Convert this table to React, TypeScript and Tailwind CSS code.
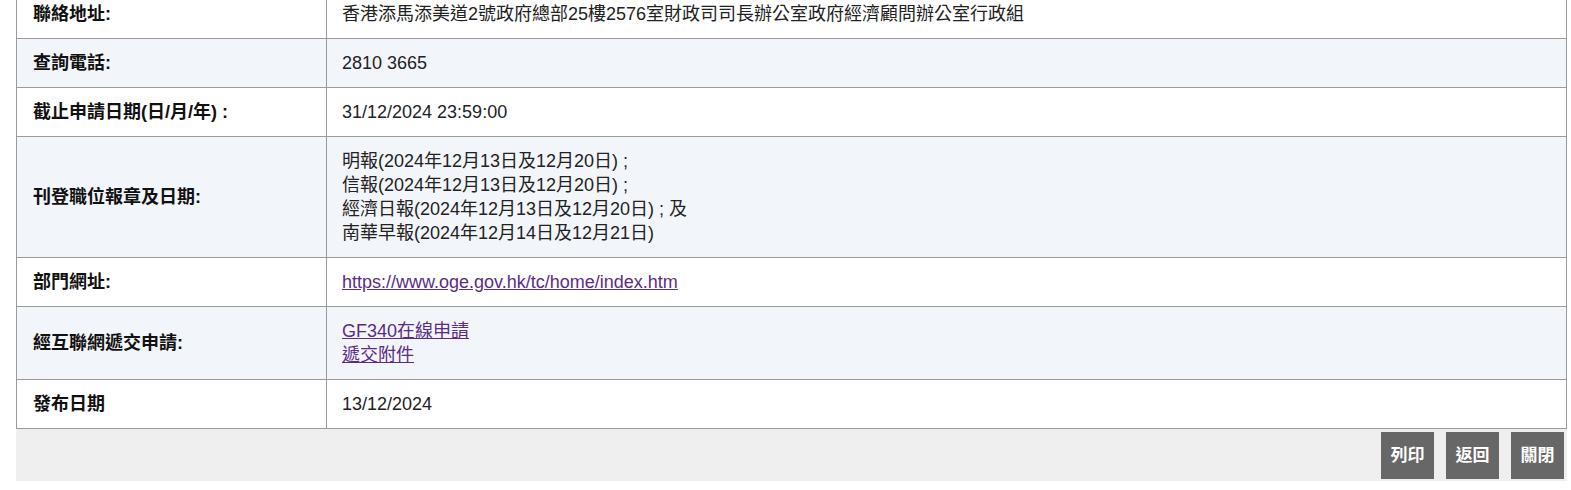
import React from "react";

type Row = { label: string; value: React.ReactNode; alt: boolean };

const linkCls = "text-[#5b2c86] underline";

export default function App() {
  const rows: Row[] = [
    {
      label: "聯絡地址:",
      value: "香港添馬添美道2號政府總部25樓2576室財政司司長辦公室政府經濟顧問辦公室行政組",
      alt: false,
    },
    { label: "查詢電話:", value: "2810 3665", alt: true },
    { label: "截止申請日期(日/月/年) :", value: "31/12/2024 23:59:00", alt: false },
    {
      label: "刊登職位報章及日期:",
      value: (
        <>
          <div>明報(2024年12月13日及12月20日) ;</div>
          <div>信報(2024年12月13日及12月20日) ;</div>
          <div>經濟日報(2024年12月13日及12月20日) ; 及</div>
          <div>南華早報(2024年12月14日及12月21日)</div>
        </>
      ),
      alt: true,
    },
    {
      label: "部門網址:",
      value: (
        <a href="#" className={linkCls}>
          https://www.oge.gov.hk/tc/home/index.htm
        </a>
      ),
      alt: false,
    },
    {
      label: "經互聯網遞交申請:",
      value: (
        <>
          <div>
            <a href="#" className={linkCls}>GF340在線申請</a>
          </div>
          <div>
            <a href="#" className={linkCls}>遞交附件</a>
          </div>
        </>
      ),
      alt: true,
    },
    { label: "發布日期", value: "13/12/2024", alt: false },
  ];

  return (
    <div
      className="w-[1571px] h-[490px] overflow-hidden bg-white text-[18px] leading-[24px] text-[#222]"
      style={{ fontFamily: '"Liberation Sans", Arial, "Noto Sans CJK TC", sans-serif' }}
    >
      <div className="-mt-[11px] ml-[16px] w-[1551px]">
        <table className="w-full border-collapse border border-[#9a9a9a]">
          <tbody>
            {rows.map((r, i) => (
              <tr key={i} className={r.alt ? "bg-[#f2f5fa]" : "bg-white"}>
                <td className="w-[310px] h-[49px] border border-[#9a9a9a] px-[16px] py-[12px] font-bold text-[#111] align-middle">
                  {r.label}
                </td>
                <td className="border border-[#9a9a9a] px-[15px] py-[12px] align-middle">
                  {r.value}
                </td>
              </tr>
            ))}
          </tbody>
        </table>
        <div className="flex justify-end gap-[12px] bg-[#efefef] pt-[3px] pr-[3px] h-[52px]">
          {["列印", "返回", "關閉"].map((t) => (
            <button
              key={t}
              className="h-[47px] w-[53px] bg-[#676767] text-white font-bold text-[17px] flex items-center justify-center"
            >
              {t}
            </button>
          ))}
        </div>
      </div>
    </div>
  );
}
